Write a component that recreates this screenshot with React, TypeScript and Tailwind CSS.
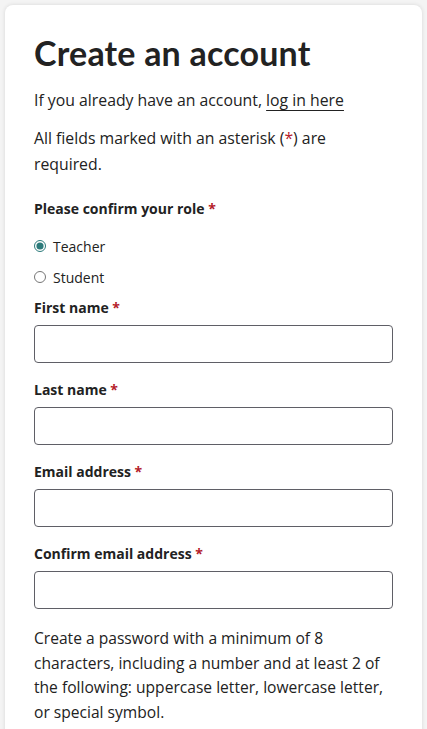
import React from "react";

const Req = () => <span className="text-[#b4202a]"> *</span>;

function Field({ label }: { label: string }) {
  return (
    <div className="flex flex-col">
      <label className="text-[14px] leading-[20px] font-bold text-[#222]">
        {label}
        <Req />
      </label>
      <input
        type="text"
        className="mt-[7px] h-[38px] w-full rounded-[4px] border border-[#5f5f66] bg-white"
      />
    </div>
  );
}

export default function App() {
  return (
    <div
      className="min-h-screen bg-[#f4f4f4] px-[5px] pt-[5px]"
      style={{ fontFamily: "'Open Sans', 'Noto Sans', sans-serif" }}
    >
      <div className="rounded-[8px] bg-white px-[29px] pt-[27px] pb-[60px] shadow-[0_0_4px_rgba(0,0,0,0.12)] text-[#222]">
        <h1
          className="text-[34px] leading-[42px] font-bold tracking-[0.2px]"
          style={{ fontFamily: "Lato, sans-serif" }}
        >
          Create an account
        </h1>
        <p className="mt-[13px] text-[15.8px] leading-[26px]">
          If you already have an account,{" "}
          <a className="underline underline-offset-[4px]" href="#">
            log in here
          </a>
        </p>
        <p className="mt-[12px] text-[15.8px] leading-[26px]">
          All fields marked with an asterisk (<span className="text-[#b4202a]">*</span>) are required.
        </p>
        <div className="mt-[22px] text-[14px] leading-[20px] font-bold">
          Please confirm your role
          <Req />
        </div>
        <div className="mt-[15px] flex flex-col gap-[7px]">
          <label className="flex h-[24px] items-center gap-[7px] text-[14px]">
            <input type="radio" name="role" defaultChecked className="m-0 h-[12px] w-[12px] accent-[#2b7a7a]" />
            Teacher
          </label>
          <label className="flex h-[24px] items-center gap-[7px] text-[14px]">
            <input type="radio" name="role" className="m-0 h-[12px] w-[12px] accent-[#2b7a7a]" />
            Student
          </label>
        </div>
        <div className="mt-[9px] flex flex-col gap-[17px]">
          <Field label="First name" />
          <Field label="Last name" />
          <Field label="Email address" />
          <Field label="Confirm email address" />
        </div>
        <p className="mt-[17px] text-[15.6px] leading-[24.5px]">
          Create a password with a minimum of 8 characters, including a number and at least 2 of the following: uppercase letter, lowercase letter, or special symbol.
        </p>
      </div>
    </div>
  );
}
